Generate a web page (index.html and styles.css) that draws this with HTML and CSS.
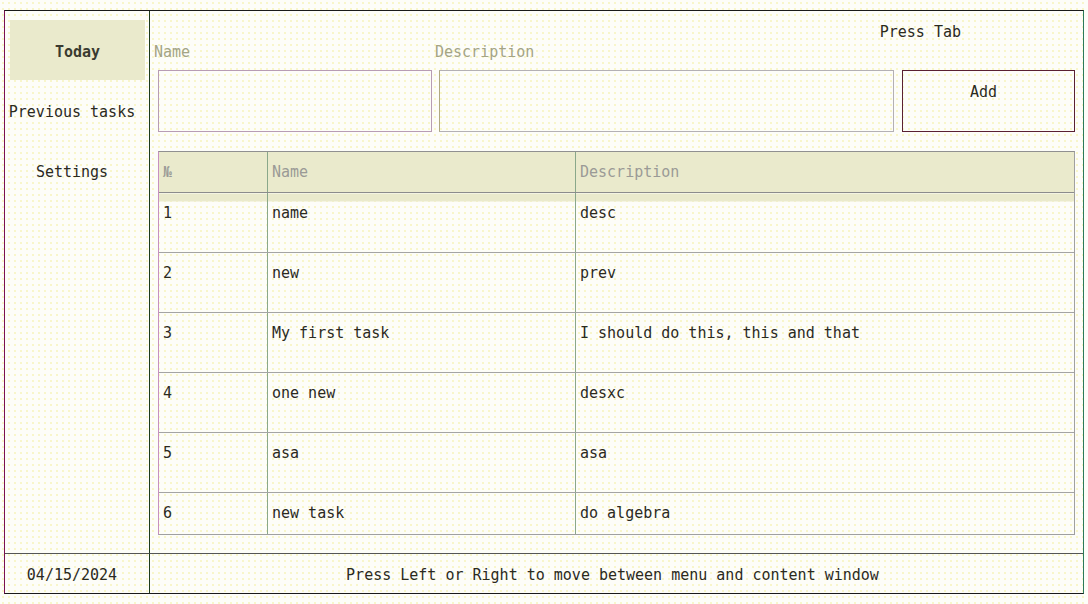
FILE: index.html
```html
<!DOCTYPE html>
<html>
<head>
<meta charset="utf-8">
<link rel="stylesheet" href="styles.css">
</head>
<body>
<div class="app">
  <nav class="sidebar">
    <div class="menu-item active">Today</div>
    <div class="menu-item">Previous tasks</div>
    <div class="menu-item">Settings</div>
  </nav>
  <main class="content">
    <div class="hint">Press Tab</div>
    <div class="form">
      <div class="field name-field">
        <div class="label">Name</div>
        <div class="input"></div>
      </div>
      <div class="field desc-field">
        <div class="label">Description</div>
        <div class="input desc-input"></div>
      </div>
      <div class="add-btn">Add</div>
    </div>
    <div class="table-wrap">
      <table class="tasks">
        <thead>
          <tr><th class="c-num">№</th><th class="c-name">Name</th><th>Description</th></tr>
        </thead>
        <tbody>
          <tr class="first"><td>1</td><td>name</td><td>desc</td></tr>
          <tr><td>2</td><td>new</td><td>prev</td></tr>
          <tr><td>3</td><td>My first task</td><td>I should do this, this and that</td></tr>
          <tr><td>4</td><td>one new</td><td>desxc</td></tr>
          <tr><td>5</td><td>asa</td><td>asa</td></tr>
          <tr><td>6</td><td>new task</td><td>do algebra</td></tr>
        </tbody>
      </table>
    </div>
  </main>
  <div class="footer-date">04/15/2024</div>
  <div class="footer-hint">Press Left or Right to move between menu and content window</div>
</div>
</body>
</html>
```
FILE: styles.css
```css
html, body {
  margin: 0;
  padding: 0;
}
body {
  width: 1088px;
  height: 604px;
  overflow: hidden;
  background-color: #fdfdf8;
  background-image: radial-gradient(circle, #f6f2b0 0.6px, transparent 0.9px);
  background-size: 6px 6px;
  font-family: "DejaVu Sans Mono", "Liberation Mono", monospace;
  font-size: 15px;
  line-height: 18px;
  color: #2b2a1e;
}
.app {
  margin: 10px 0 0 4px;
  width: 1080px;
  height: 584px;
  box-sizing: border-box;
  border: 1px solid #1a1a1a;
  border-left-color: #7a1050;
  border-right-color: #2a7a5a;
  display: grid;
  grid-template-columns: 145px 1fr;
  grid-template-rows: 1fr 40px;
}
.sidebar {
  border-right: 1px solid #1c3a1c;
  padding: 9px 4px 0 5px;
  display: flex;
  flex-direction: column;
}
.menu-item {
  height: 60px;
  padding-top: 3px;
  box-sizing: border-box;
  display: flex;
  align-items: center;
  justify-content: center;
  white-space: nowrap;
  margin: 0 -4px 0 -15px;
}
.menu-item.active {
  margin: 0;
  background: #eaeacc;
  font-weight: bold;
  color: #3a3a30;
}
.content {
  padding: 12px 0 0 4px;
  display: flex;
  flex-direction: column;
  min-width: 0;
}
.hint {
  text-align: right;
  padding-right: 122px;
  height: 20px;
}
.form {
  display: flex;
  align-items: flex-end;
}
.field {
  display: flex;
  flex-direction: column;
}
.name-field { width: 281px; }
.desc-field { width: 459px; }
.label {
  color: #a4a484;
  height: 18px;
  margin-bottom: 9px;
}
.input {
  margin-left: 4px;
  height: 62px;
  box-sizing: border-box;
  border: 1px solid #b89cb4;
}
.desc-input {
  width: 455px;
  border-color: #b4b0b4;
  border-left-color: #b0aa80;
}
.name-field .input { width: 274px; }
.add-btn {
  margin-left: 8px;
  width: 173px;
  height: 62px;
  box-sizing: border-box;
  border: 1px solid #5a2032;
  text-align: center;
  padding: 12px 10px 0 0;
  color: #2b2a1e;
}
.table-wrap {
  margin: 19px 0 0 4px;
  width: 917px;
  height: 384px;
  box-sizing: border-box;
  border: 1px solid #a0a0a0;
  border-left-color: #c890c0;
  border-top-color: #909090;
  overflow: hidden;
}
.tasks {
  width: 100%;
  border-collapse: collapse;
  table-layout: fixed;
}
.tasks th, .tasks td {
  text-align: left;
  vertical-align: top;
  font-weight: normal;
  padding: 11px 4px 0 4px;
  border-left: 1px solid #8aa88a;
  white-space: nowrap;
}
.tasks th:first-child, .tasks td:first-child {
  border-left: none;
}
.tasks th {
  height: 29px;
  background: #eaeacc;
  color: #9a9a96;
  border-bottom: 1px solid #8c8c8c;
}
.tasks td {
  height: 48px;
  border-bottom: 1px solid #a4a4a4;
}
.tasks .c-num { width: 100px; }
.tasks .c-name { width: 299px; }
.tasks tr.first td {
  background: linear-gradient(#eaeacc 8px, transparent 8px);
}
.footer-date, .footer-hint {
  border-top: 1px solid #555;
  display: flex;
  align-items: center;
  justify-content: center;
  white-space: nowrap;
  padding-top: 2px;
  box-sizing: border-box;
}
.footer-date {
  border-right: 1px solid #1c3a1c;
  padding-right: 10px;
}
.footer-hint {
  padding-right: 8px;
}
```
